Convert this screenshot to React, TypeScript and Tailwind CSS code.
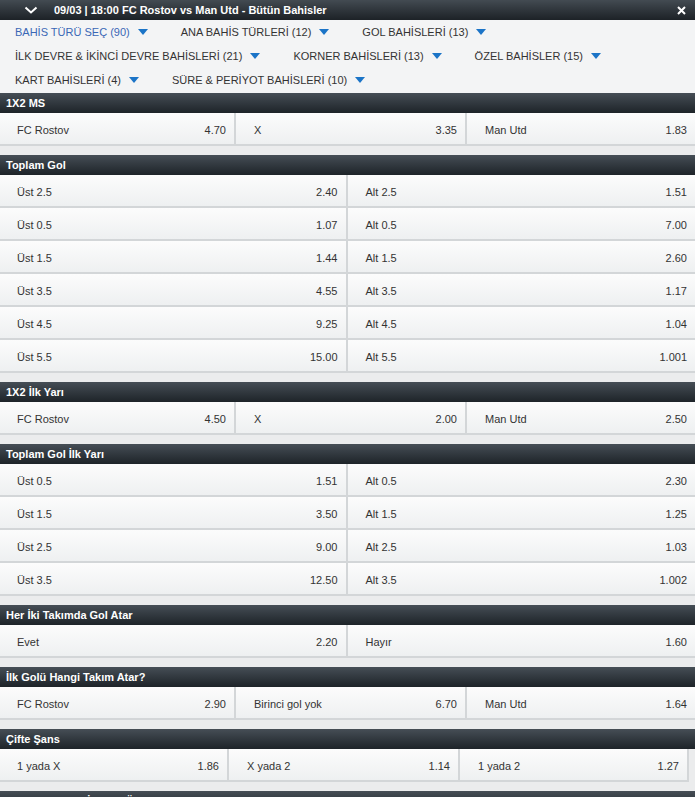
import React from "react";

type Odd = { label: string; value: string };

const filters: { text: string; active?: boolean }[] = [
  { text: "BAHİS TÜRÜ SEÇ (90)", active: true },
  { text: "ANA BAHİS TÜRLERİ (12)" },
  { text: "GOL BAHİSLERİ (13)" },
  { text: "İLK DEVRE & İKİNCİ DEVRE BAHİSLERİ (21)" },
  { text: "KORNER BAHİSLERİ (13)" },
  { text: "ÖZEL BAHİSLER (15)" },
  { text: "KART BAHİSLERİ (4)" },
  { text: "SÜRE & PERİYOT BAHİSLERİ (10)" },
];

const Caret = () => (
  <svg width="10" height="6" viewBox="0 0 10 6" className="shrink-0">
    <path d="M0 0 L10 0 L5 6 Z" fill="#1b74c7" />
  </svg>
);

const SectionHeader = ({ title }: { title: string }) => (
  <div className="h-5 flex items-center px-[6px] pt-px bg-linear-to-b from-[#464e56] to-[#1e2429] text-white font-bold text-[11px] leading-none">
    {title}
  </div>
);

const Cell = ({
  odd,
  divider,
  first,
  className = "",
}: {
  odd: Odd;
  divider?: boolean;
  first?: boolean;
  className?: string;
}) => (
  <div
    className={`h-[33px] flex items-center justify-between pr-2 pt-[3px] bg-linear-to-b from-[#fcfcfc] to-[#eef0f1] border-b-2 border-[#d3d6d8] text-[11px] text-[#333] ${
      first ? "pl-[17px]" : "pl-[18px]"
    } ${divider ? "border-r-2" : ""} ${className}`}
  >
    <span>{odd.label}</span>
    <span>{odd.value}</span>
  </div>
);

const Three = ({ title, odds }: { title: string; odds: Odd[] }) => (
  <div className="mb-[9px]">
    <SectionHeader title={title} />
    <div className="flex">
      <Cell odd={odds[0]} first divider className="w-[236px]" />
      <Cell odd={odds[1]} divider className="w-[231px]" />
      <Cell odd={odds[2]} className="flex-1" />
    </div>
  </div>
);

const Two = ({ title, rows }: { title: string; rows: [Odd, Odd][] }) => (
  <div className="mb-[9px]">
    <SectionHeader title={title} />
    {rows.map((r, i) => (
      <div key={i} className="flex">
        <Cell odd={r[0]} first divider className="w-1/2" />
        <Cell odd={r[1]} className="w-1/2" />
      </div>
    ))}
  </div>
);

const ou = (pairs: [string, string, string][]): [Odd, Odd][] =>
  pairs.map(([n, u, a]) => [
    { label: `Üst ${n}`, value: u },
    { label: `Alt ${n}`, value: a },
  ]);

export default function App() {
  return (
    <div
      className="w-[695px] h-[797px] overflow-hidden bg-[#ebeced]"
      style={{ fontFamily: '"Liberation Sans", Arial, sans-serif' }}
    >
      {/* top bar */}
      <div className="h-5 flex items-center bg-linear-to-b from-[#434b52] to-[#1d2227] text-white">
        <svg width="14" height="8" viewBox="0 0 14 8" className="ml-[24px] mr-[16px]">
          <path d="M1.5 1.5 L7 6.5 L12.5 1.5" stroke="#fff" strokeWidth="2" fill="none" />
        </svg>
        <span className="font-bold text-[11px] leading-none">09/03 | 18:00 FC Rostov vs Man Utd - Bütün Bahisler</span>
        <svg width="9" height="9" viewBox="0 0 9 9" className="ml-auto mr-[9px]">
          <path d="M1 1 L8 8 M8 1 L1 8" stroke="#fff" strokeWidth="2" />
        </svg>
      </div>

      {/* filters */}
      <div className="h-[73px] bg-[#f3f4f5] pl-[15px] flex flex-wrap content-start gap-x-[33px]">
        {filters.map((f) => (
          <div key={f.text} className="h-6 flex items-center gap-2 text-[11px]">
            <span className={f.active ? "text-[#3a67b5]" : "text-[#333]"}>{f.text}</span>
            <Caret />
          </div>
        ))}
      </div>

      <Three
        title="1X2 MS"
        odds={[
          { label: "FC Rostov", value: "4.70" },
          { label: "X", value: "3.35" },
          { label: "Man Utd", value: "1.83" },
        ]}
      />

      <Two
        title="Toplam Gol"
        rows={ou([
          ["2.5", "2.40", "1.51"],
          ["0.5", "1.07", "7.00"],
          ["1.5", "1.44", "2.60"],
          ["3.5", "4.55", "1.17"],
          ["4.5", "9.25", "1.04"],
          ["5.5", "15.00", "1.001"],
        ])}
      />

      <Three
        title="1X2 İlk Yarı"
        odds={[
          { label: "FC Rostov", value: "4.50" },
          { label: "X", value: "2.00" },
          { label: "Man Utd", value: "2.50" },
        ]}
      />

      <Two
        title="Toplam Gol İlk Yarı"
        rows={ou([
          ["0.5", "1.51", "2.30"],
          ["1.5", "3.50", "1.25"],
          ["2.5", "9.00", "1.03"],
          ["3.5", "12.50", "1.002"],
        ])}
      />

      <Two
        title="Her İki Takımda Gol Atar"
        rows={[
          [
            { label: "Evet", value: "2.20" },
            { label: "Hayır", value: "1.60" },
          ],
        ]}
      />

      <Three
        title="İlk Golü Hangi Takım Atar?"
        odds={[
          { label: "FC Rostov", value: "2.90" },
          { label: "Birinci gol yok", value: "6.70" },
          { label: "Man Utd", value: "1.64" },
        ]}
      />

      {/* çifte şans: narrower cells, last one keeps its right border */}
      <div className="mb-[9px]">
        <SectionHeader title="Çifte Şans" />
        <div className="flex">
          <Cell odd={{ label: "1 yada X", value: "1.86" }} first divider className="w-[229px]" />
          <Cell odd={{ label: "X yada 2", value: "1.14" }} divider className="w-[231px]" />
          <Cell odd={{ label: "1 yada 2", value: "1.27" }} divider className="w-[229px]" />
        </div>
      </div>

      <SectionHeader title="Karşılıklı Gol & İlk Yarı Üst/Alt" />
    </div>
  );
}
